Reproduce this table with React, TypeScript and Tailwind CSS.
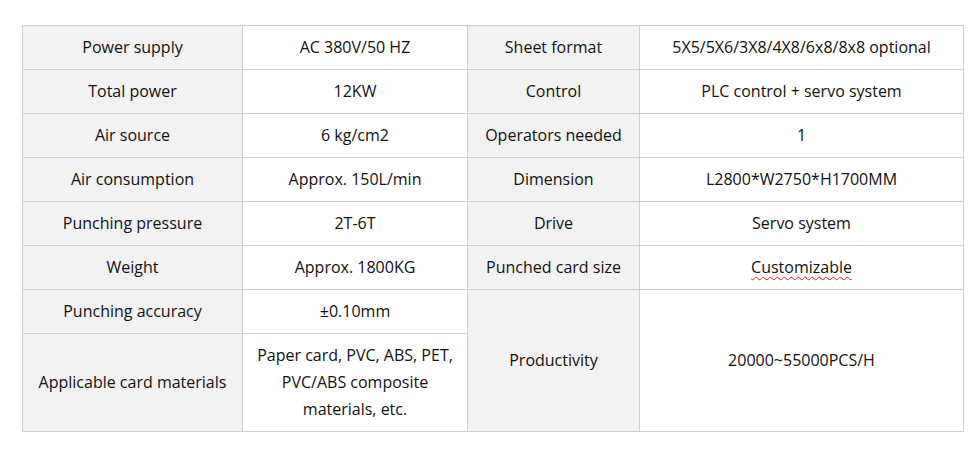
import React from "react";

const Lbl = ({ children, rowSpan }: { children: React.ReactNode; rowSpan?: number }) => (
  <td rowSpan={rowSpan} className="border border-[#d0d0d0] bg-[#f2f2f2] px-2 py-2 text-center align-middle">
    {children}
  </td>
);
const Val = ({ children, rowSpan }: { children: React.ReactNode; rowSpan?: number }) => (
  <td rowSpan={rowSpan} className="border border-[#d0d0d0] bg-white px-2 py-2 text-center align-middle">
    {children}
  </td>
);

export default function App() {
  return (
    <div className="w-[980px] h-[460px] bg-white pt-[25px] pl-[22px] font-['Open_Sans','Noto_Sans',sans-serif]">
      <table className="table-fixed w-[941px] border-collapse text-[16px] leading-[27px] text-[#111]">
        <colgroup>
          <col className="w-[220px]" />
          <col className="w-[225px]" />
          <col className="w-[172px]" />
          <col className="w-[324px]" />
        </colgroup>
        <tbody>
          <tr>
            <Lbl>Power supply</Lbl>
            <Val>AC 380V/50 HZ</Val>
            <Lbl>Sheet format</Lbl>
            <Val>5X5/5X6/3X8/4X8/6x8/8x8 optional</Val>
          </tr>
          <tr>
            <Lbl>Total power</Lbl>
            <Val>12KW</Val>
            <Lbl>Control</Lbl>
            <Val>PLC control + servo system</Val>
          </tr>
          <tr>
            <Lbl>Air source</Lbl>
            <Val>6 kg/cm2</Val>
            <Lbl>Operators needed</Lbl>
            <Val>1</Val>
          </tr>
          <tr>
            <Lbl>Air consumption</Lbl>
            <Val>Approx. 150L/min</Val>
            <Lbl>Dimension</Lbl>
            <Val>L2800*W2750*H1700MM</Val>
          </tr>
          <tr>
            <Lbl>Punching pressure</Lbl>
            <Val>2T-6T</Val>
            <Lbl>Drive</Lbl>
            <Val>Servo system</Val>
          </tr>
          <tr>
            <Lbl>Weight</Lbl>
            <Val>Approx. 1800KG</Val>
            <Lbl>Punched card size</Lbl>
            <Val>
              <span className="underline decoration-wavy decoration-[#e02020] decoration-1 underline-offset-[3px]">Customizable</span>
            </Val>
          </tr>
          <tr>
            <Lbl>Punching accuracy</Lbl>
            <Val>±0.10mm</Val>
            <Lbl rowSpan={2}>Productivity</Lbl>
            <Val rowSpan={2}>20000~55000PCS/H</Val>
          </tr>
          <tr>
            <Lbl>Applicable card materials</Lbl>
            <Val>
              Paper card, PVC, ABS, PET,
              <br />
              PVC/ABS composite
              <br />
              materials, etc.
            </Val>
          </tr>
        </tbody>
      </table>
    </div>
  );
}
